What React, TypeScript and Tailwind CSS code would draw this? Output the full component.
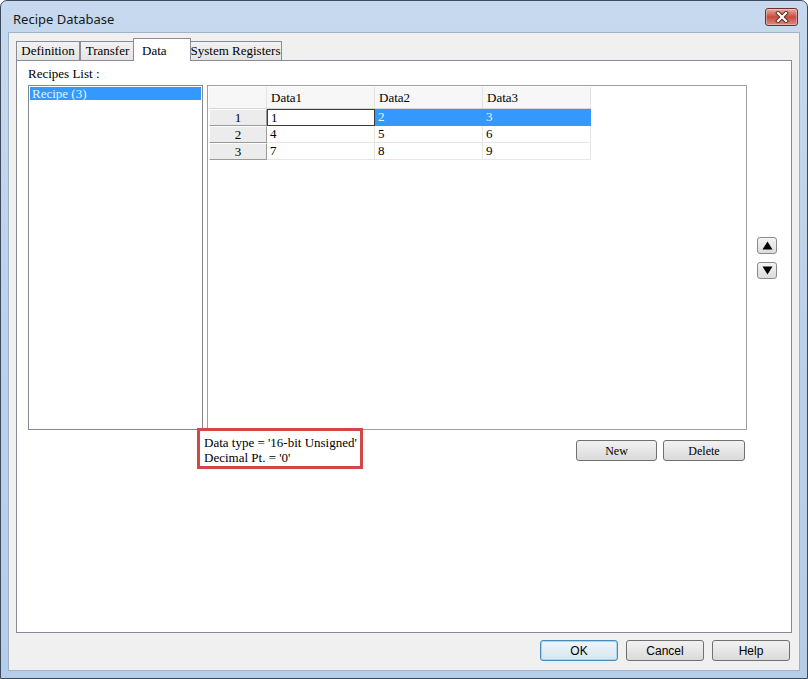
import React from "react";

const serif = "font-['Liberation_Serif','Times_New_Roman',serif]";
const sans = "font-['Liberation_Sans','Open_Sans',Arial,sans-serif]";

const columns = ["Data1", "Data2", "Data3"];
const rows = [
  ["1", "2", "3"],
  ["4", "5", "6"],
  ["7", "8", "9"],
];

function CloseButton() {
  return (
    <div className="flex h-[18px] w-[33px] items-center justify-center rounded-[3px] border border-[#6e2f2a] bg-gradient-to-b from-[#e9aaa1] via-[#c94a3d] to-[#d9897f] shadow-[inset_0_0_0_1px_rgba(255,255,255,0.35)]">
      <svg width="14" height="12" viewBox="0 0 14 12">
        <path d="M3 2 L11 10 M11 2 L3 10" stroke="#5a2420" strokeWidth="4" strokeLinecap="square" />
        <path d="M3 2 L11 10 M11 2 L3 10" stroke="#ffffff" strokeWidth="2.2" strokeLinecap="square" />
      </svg>
    </div>
  );
}

function Tab({ label, width, active }: { label: string; width: string; active?: boolean }) {
  if (active) {
    return (
      <div
        className={`relative z-10 -mx-[2px] -mb-px flex h-[23px] ${width} items-start justify-start border border-b-0 border-[#898c95] bg-white pl-[8px] pt-[2px] text-[13px] text-black ${serif}`}
      >
        {label}
      </div>
    );
  }
  return (
    <div
      className={`flex h-[19px] ${width} items-center justify-center border border-b-0 border-[#898c95] bg-gradient-to-b from-[#f2f2f2] to-[#e4e4e4] text-[13px] text-black ${serif}`}
    >
      {label}
    </div>
  );
}

function ArrowButton({ up }: { up?: boolean }) {
  return (
    <div className="flex h-[17px] w-[20px] items-center justify-center rounded-[3px] border border-[#8a8a8a] bg-gradient-to-b from-[#f4f4f4] to-[#dcdcdc]">
      <svg width="11" height="9" viewBox="0 0 11 9">
        {up ? <path d="M5.5 0.5 L10.5 8.5 L0.5 8.5 Z" fill="#000" /> : <path d="M0.5 0.5 L10.5 0.5 L5.5 8.5 Z" fill="#000" />}
      </svg>
    </div>
  );
}

function DlgButton({ label, width, font, def }: { label: string; width: string; font: string; def?: boolean }) {
  return (
    <button
      className={`flex h-[21px] ${width} items-center justify-center rounded-[3px] border ${
        def
          ? "border-[#4a8ab8] from-[#eef5f9] to-[#d6e6ef] shadow-[inset_0_0_0_1px_#a9d4ee]"
          : "border-[#707070] from-[#f2f2f2] to-[#dadada]"
      } bg-gradient-to-b text-[12px] text-black ${font}`}
    >
      {label}
    </button>
  );
}

function DataGrid() {
  return (
    <div className="h-[345px] w-[540px] border border-[#a0a0a0] bg-white p-px">
      <div className="flex h-[22px] w-[382px] border-b border-[#d5d5d5] bg-[#f7f7f7]">
        <div className="w-[58px] border-r border-[#e2e2e2]" />
        {columns.map((c) => (
          <div key={c} className={`flex w-[108px] items-center border-r border-[#e2e2e2] pl-[4px] text-[13px] ${serif}`}>
            {c}
          </div>
        ))}
      </div>
      {rows.map((r, i) => (
        <div key={i} className="flex h-[17px]">
          <div
            className={`flex w-[58px] items-center justify-center border border-t-white border-l-white border-r-[#9a9a9a] border-b-[#9a9a9a] bg-[#ececec] text-[13px] ${serif}`}
          >
            {i + 1}
          </div>
          {r.map((v, j) => {
            const focus = i === 0 && j === 0;
            const sel = i === 0 && j > 0;
            return (
              <div
                key={j}
                className={`flex w-[108px] items-center pl-[3px] text-[13px] ${serif} ${
                  focus
                    ? "border border-[#3a3a3a] bg-white"
                    : sel
                    ? "border-r border-b border-[#3399ff] bg-[#3399ff] text-[#e8f3ff]"
                    : "border-r border-b border-[#e6e6e6] bg-white"
                }`}
              >
                {v}
              </div>
            );
          })}
        </div>
      ))}
    </div>
  );
}

export default function App() {
  return (
    <div className="h-[679px] w-[808px] bg-white">
      <div className="flex h-full w-full flex-col rounded-t-[7px] border border-[#3b4a5d] bg-gradient-to-b from-[#c6d9ee] via-[#bcd2ea] to-[#b6cde7]">
        {/* title bar */}
        <div className="flex h-[31px] items-center justify-between pl-[12px] pr-[9px]">
          <span className="pt-[7px] text-[13px] text-[#1a1a1a] font-['Noto_Sans','Open_Sans',sans-serif]">Recipe Database</span>
          <CloseButton />
        </div>

        {/* client area */}
        <div className="mx-[7px] mb-[7px] flex flex-1 flex-col border border-[#9db3cc] bg-[#f0f0f0]">
          {/* tabs */}
          <div className="flex h-[27px] items-end px-[7px]">
            <Tab label="Definition" width="w-[64px]" />
            <Tab label="Transfer" width="w-[55px]" />
            <Tab label="Data" width="w-[58px]" active />
            <Tab label="System Registers" width="w-[93px]" />
          </div>

          {/* tab panel */}
          <div className="mx-[7px] flex h-[573px] flex-col border border-[#898c95] bg-white pl-[11px]">
            <div className={`pt-[5px] text-[13px] leading-[16px] ${serif}`}>Recipes List :</div>
            <div className="mt-[3px] flex">
              <div className="h-[345px] w-[175px] border border-[#828790] bg-white p-px">
                <div className={`flex h-[13px] items-center bg-[#3399ff] pl-[2px] text-[13px] text-[#e6f2ff] ${serif}`}>
                  Recipe (3)
                </div>
              </div>
              <div className="ml-[4px]">
                <DataGrid />
              </div>
              <div className="ml-[10px] flex flex-col gap-[8px] pt-[152px]">
                <ArrowButton up />
                <ArrowButton />
              </div>
            </div>

            <div className="flex w-[719px] items-start">
              <div className={`-mt-[2px] ml-[169px] h-[41px] w-[166px] border-[3px] border-[#d24848] bg-white pl-[4px] pt-[4px] text-[13px] leading-[15px] ${serif}`}>
                <div>Data type = '16-bit Unsigned'</div>
                <div>Decimal Pt. = '0'</div>
              </div>
              <div className="ml-auto mr-[2px] mt-[10px] flex gap-[6px]">
                <DlgButton label="New" width="w-[81px]" font={serif} />
                <DlgButton label="Delete" width="w-[82px]" font={serif} />
              </div>
            </div>
          </div>

          {/* bottom buttons */}
          <div className="flex justify-end gap-[8px] pr-[9px] pt-[7px]">
            <DlgButton label="OK" width="w-[78px]" font={sans} def />
            <DlgButton label="Cancel" width="w-[78px]" font={sans} />
            <DlgButton label="Help" width="w-[78px]" font={sans} />
          </div>
        </div>
      </div>
    </div>
  );
}
